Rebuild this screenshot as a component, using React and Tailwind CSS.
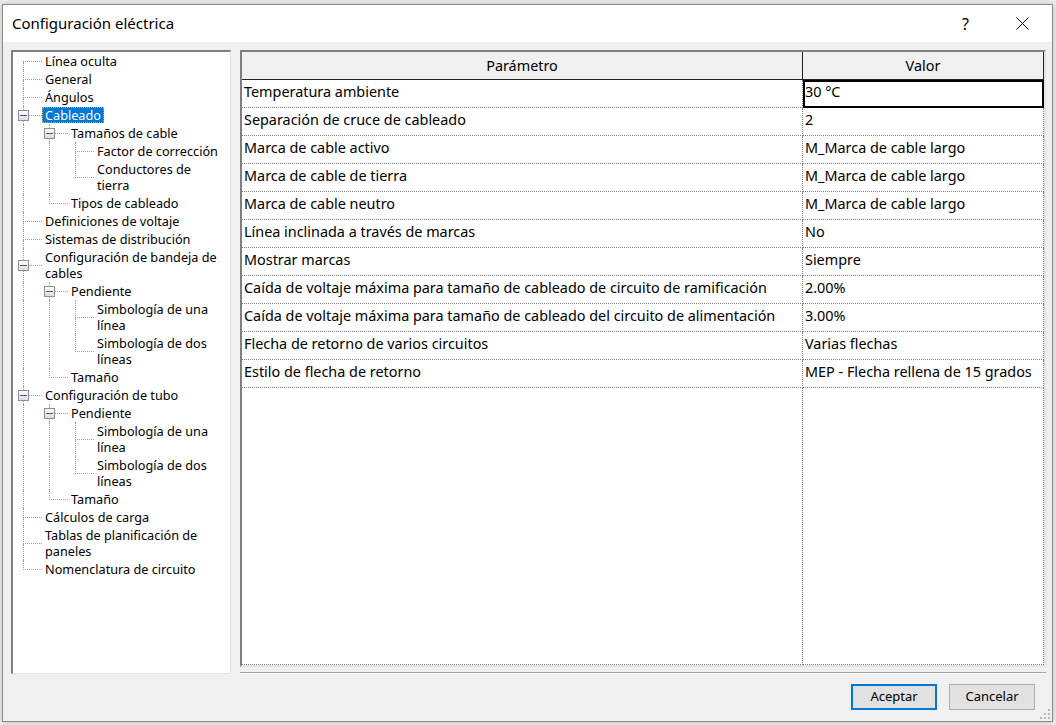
import React from 'react';

const tree = [
  { label: ['Línea oculta'] },
  { label: ['General'] },
  { label: ['Ángulos'] },
  {
    label: ['Cableado'],
    selected: true,
    children: [
      {
        label: ['Tamaños de cable'],
        children: [
          { label: ['Factor de corrección'] },
          { label: ['Conductores de', 'tierra'] },
        ],
      },
      { label: ['Tipos de cableado'] },
    ],
  },
  { label: ['Definiciones de voltaje'] },
  { label: ['Sistemas de distribución'] },
  {
    label: ['Configuración de bandeja de', 'cables'],
    children: [
      {
        label: ['Pendiente'],
        children: [
          { label: ['Simbología de una', 'línea'] },
          { label: ['Simbología de dos', 'líneas'] },
        ],
      },
      { label: ['Tamaño'] },
    ],
  },
  {
    label: ['Configuración de tubo'],
    children: [
      {
        label: ['Pendiente'],
        children: [
          { label: ['Simbología de una', 'línea'] },
          { label: ['Simbología de dos', 'líneas'] },
        ],
      },
      { label: ['Tamaño'] },
    ],
  },
  { label: ['Cálculos de carga'] },
  { label: ['Tablas de planificación de', 'paneles'] },
  { label: ['Nomenclatura de circuito'] },
];

// flatten the tree into rows, remembering which ancestor lines keep going
const flatten = (nodes, guides = [], out = []) => {
  nodes.forEach((node, i) => {
    const isLast = i === nodes.length - 1;
    out.push({ ...node, guides, isLast, isFirstRoot: guides.length === 0 && i === 0 });
    if (node.children) flatten(node.children, [...guides, !isLast], out);
  });
  return out;
};

const rows = [
  ['Temperatura ambiente', '30 °C'],
  ['Separación de cruce de cableado', '2'],
  ['Marca de cable activo', 'M_Marca de cable largo'],
  ['Marca de cable de tierra', 'M_Marca de cable largo'],
  ['Marca de cable neutro', 'M_Marca de cable largo'],
  ['Línea inclinada a través de marcas', 'No'],
  ['Mostrar marcas', 'Siempre'],
  ['Caída de voltaje máxima para tamaño de cableado de circuito de ramificación', '2.00%'],
  ['Caída de voltaje máxima para tamaño de cableado del circuito de alimentación', '3.00%'],
  ['Flecha de retorno de varios circuitos', 'Varias flechas'],
  ['Estilo de flecha de retorno', 'MEP - Flecha rellena de 15 grados'],
];

function ExpandBox() {
  return (
    <div className="absolute left-[5px] top-1/2 -mt-[5px] w-[11px] h-[11px] border border-[#8e8f8f] bg-gradient-to-b from-white to-[#dcdcdc] flex items-center justify-center">
      <div className="w-[7px] h-[1px] bg-[#3c5a9a]" />
    </div>
  );
}

function TreeRow({ row }) {
  return (
    <div className="flex">
      {row.guides.map((g, i) => (
        <div key={i} className="w-[26px] shrink-0 flex">
          {g && <div className="ml-[10px] border-l border-dotted border-[#a0a0a0]" />}
        </div>
      ))}
      <div className="w-[29px] shrink-0 relative flex flex-col">
        <div className={`flex-1 ml-[10px] border-b border-dotted border-[#a0a0a0] ${row.isFirstRoot ? '' : 'border-l'}`} />
        <div className={`flex-1 ml-[10px] border-dotted border-[#a0a0a0] ${row.isLast ? '' : 'border-l'}`} />
        {row.children && <ExpandBox />}
      </div>
      <div className="py-[1px]">
        <div
          className={`px-[3px] leading-[16px] ${
            row.selected ? 'bg-[#0078d7] text-white outline outline-1 outline-dotted outline-[#f0a040] -outline-offset-1' : 'text-black'
          }`}
        >
          {row.label.map((l, i) => (
            <div key={i} className="whitespace-nowrap">{l}</div>
          ))}
        </div>
      </div>
    </div>
  );
}

export default function App() {
  const treeRows = flatten(tree);

  return (
    <div className="w-[1056px] h-[725px] bg-[#ececec] pl-[2px] pt-[4px] overflow-hidden font-['Noto_Sans',sans-serif]">
      <div className="w-[1051px] h-[718px] border border-[#8a8a8a] bg-[#f0f0f0] flex flex-col shadow-[0_0_6px_rgba(0,0,0,0.2)]">
        {/* title bar */}
        <div className="h-[37px] bg-white flex items-center pl-[9px] shrink-0">
          <span className="text-[15px] text-black">Configuración eléctrica</span>
          <div className="flex-1" />
          <span className="text-[16px] text-black mr-[47px]">?</span>
          <svg width="13" height="13" viewBox="0 0 13 13" className="mr-[23px]">
            <path d="M0.5 0.5 L12.5 12.5 M12.5 0.5 L0.5 12.5" stroke="#000" strokeWidth="1" />
          </svg>
        </div>

        {/* body */}
        <div className="flex-1 flex pl-[8px] pt-[8px] pr-[5px] relative">
          {/* tree */}
          <div className="w-[220px] h-[624px] bg-white border-l-2 border-t-2 border-l-[#7f7f7f] border-t-[#7f7f7f] border-r border-b border-r-[#e3e3e3] border-b-[#e3e3e3] text-[12.7px] overflow-hidden">
            {treeRows.map((row, i) => (
              <TreeRow key={i} row={row} />
            ))}
          </div>

          {/* right side */}
          <div className="ml-[9px] w-[806px] flex flex-col">
            <div className="h-[617px] bg-white border-l-2 border-t-2 border-l-[#7f7f7f] border-t-[#7f7f7f] border-r-2 border-b-2 border-r-[#e3e3e3] border-b-[#e3e3e3] flex flex-col text-[14.4px] text-black">
              {/* header */}
              <div className="grid grid-cols-[561px_1fr] h-[28px] bg-[#f0f0f0] border-b border-[#222]">
                <div className="border-r border-[#222] flex items-center justify-center">Parámetro</div>
                <div className="border-r border-[#222] flex items-center justify-center">Valor</div>
              </div>
              {rows.map(([p, v], i) => (
                <div key={i} className="grid grid-cols-[561px_1fr] h-[28px]">
                  <div className="border-r border-b border-dotted border-[#808080] flex items-center px-[2px] pb-[3px] whitespace-nowrap">{p}</div>
                  <div
                    className={`border-r border-b border-dotted border-[#808080] flex items-center px-[2px] pb-[3px] whitespace-nowrap ${
                      i === 0 ? 'outline outline-2 outline-black -outline-offset-2' : ''
                    }`}
                  >
                    {v}
                  </div>
                </div>
              ))}
              <div className="flex-1 grid grid-cols-[561px_1fr]">
                <div className="border-r border-b border-dotted border-[#808080]" />
                <div className="border-r border-b border-dotted border-[#808080]" />
              </div>
            </div>

            <div className="mt-[5px] h-[2px] border-t border-t-[#a0a0a0] border-b border-b-white" />

            <div className="mt-[10px] flex justify-end gap-[12px] pr-[11px] text-[13px] text-black">
              <button className="w-[86px] h-[26px] bg-[#e1e1e1] border-2 border-[#0078d7]">Aceptar</button>
              <button className="w-[86px] h-[26px] bg-[#e1e1e1] border border-[#adadad]">Cancelar</button>
            </div>
          </div>

          {/* resize grip */}
          <svg width="12" height="12" viewBox="0 0 12 12" className="absolute right-[1px] bottom-[1px]">
            {[[9, 1], [9, 5], [5, 5], [9, 9], [5, 9], [1, 9]].map(([x, y], i) => (
              <rect key={i} x={x} y={y} width="2" height="2" fill="#b8b8b8" />
            ))}
          </svg>
        </div>
      </div>
    </div>
  );
}
